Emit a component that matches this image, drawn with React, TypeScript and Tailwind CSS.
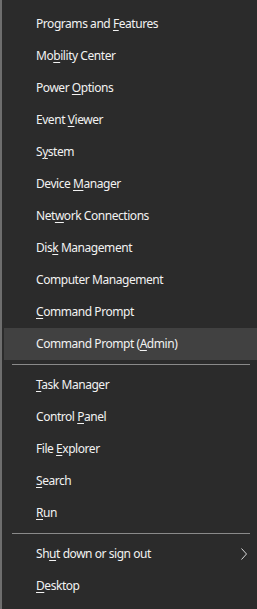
import React from 'react';

type Item = { label: string; key: number; submenu?: boolean; active?: boolean };

const groups: Item[][] = [
  [
    { label: 'Programs and Features', key: 13 },
    { label: 'Mobility Center', key: 2 },
    { label: 'Power Options', key: 6 },
    { label: 'Event Viewer', key: 6 },
    { label: 'System', key: 1 },
    { label: 'Device Manager', key: 7 },
    { label: 'Network Connections', key: 3 },
    { label: 'Disk Management', key: 3 },
    { label: 'Computer Management', key: -1 },
    { label: 'Command Prompt', key: 0 },
    { label: 'Command Prompt (Admin)', key: 16, active: true },
  ],
  [
    { label: 'Task Manager', key: 0 },
    { label: 'Control Panel', key: 8 },
    { label: 'File Explorer', key: 5 },
    { label: 'Search', key: 0 },
    { label: 'Run', key: 0 },
  ],
  [
    { label: 'Shut down or sign out', key: 2, submenu: true },
    { label: 'Desktop', key: 0 },
  ],
];

const Label = ({ label, k }: { label: string; k: number }) => {
  if (k < 0) return <>{label}</>;
  return (
    <>
      {label.slice(0, k)}
      <span className="underline underline-offset-2 decoration-1">{label[k]}</span>
      {label.slice(k + 1)}
    </>
  );
};

export default function App() {
  return (
    <div
      className="w-[257px] h-[609px] bg-[#2b2b2b] border-l-2 border-[#6e6e6e] pt-2 text-[#f2f2f2] text-[12px] tracking-[-0.45px] overflow-hidden"
      style={{ fontFamily: '"Segoe UI", "Noto Sans", "Open Sans", sans-serif' }}
    >
      {groups.map((group, gi) => (
        <div key={gi}>
          {gi > 0 && (
            <div className="py-1 pl-[10px] pr-[7px]">
              <div className="h-px bg-[#8a8a8a]" />
            </div>
          )}
          {group.map((item) => (
            <div
              key={item.label}
              className={`ml-[2px] h-8 flex items-center pl-[32px] pr-3 ${item.active ? 'bg-[#414141]' : ''}`}
            >
              <span className="flex-1 whitespace-nowrap">
                <Label label={item.label} k={item.key} />
              </span>
              {item.submenu && (
                <svg width="6" height="12" viewBox="0 0 6 12" className="mr-[-2px]">
                  <path d="M0.5 0.5 L5.5 6 L0.5 11.5" fill="none" stroke="#d8d8d8" strokeWidth="1" />
                </svg>
              )}
            </div>
          ))}
        </div>
      ))}
    </div>
  );
}
